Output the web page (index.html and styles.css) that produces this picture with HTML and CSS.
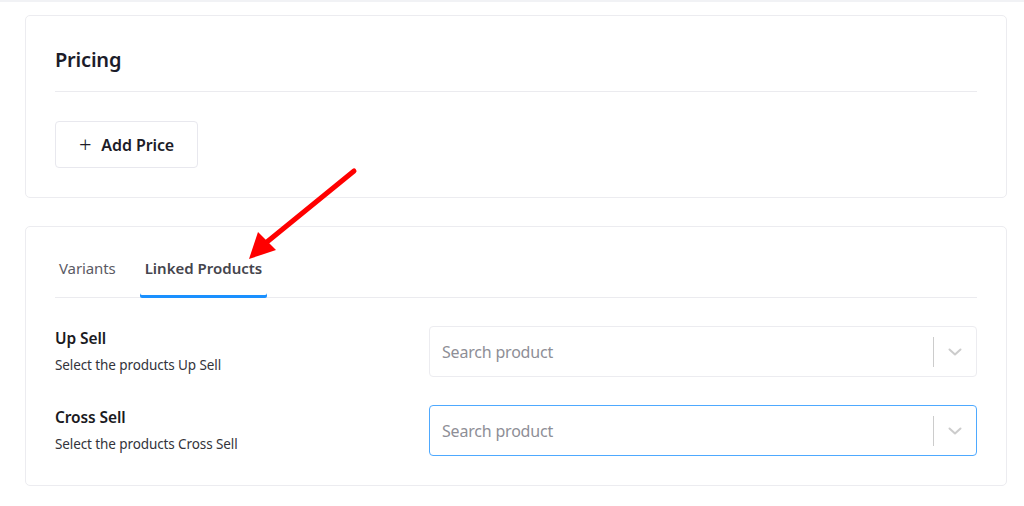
FILE: index.html
```html
<!DOCTYPE html>
<html>
<head>
<meta charset="utf-8">
<link rel="stylesheet" href="styles.css">
</head>
<body>
<div class="page">
  <section class="card pricing">
    <h2 class="card-title">Pricing</h2>
    <div class="divider"></div>
    <button class="btn-add"><span class="plus">+</span>Add Price</button>
  </section>

  <section class="card linked">
    <div class="tabs">
      <div class="tab">Variants</div>
      <div class="tab active">Linked Products</div>
    </div>
    <div class="rows">
      <div class="row">
        <div class="label">
          <div class="label-title">Up Sell</div>
          <div class="label-desc">Select the products Up Sell</div>
        </div>
        <div class="select">
          <span class="placeholder">Search product</span>
          <span class="sep"></span>
          <svg class="chev" width="14" height="8" viewBox="0 0 14 8"><path d="M1.5 1.5 L7 6.5 L12.5 1.5" fill="none" stroke="#cccccc" stroke-width="2" stroke-linecap="round" stroke-linejoin="round"/></svg>
        </div>
      </div>
      <div class="row">
        <div class="label">
          <div class="label-title">Cross Sell</div>
          <div class="label-desc">Select the products Cross Sell</div>
        </div>
        <div class="select focused">
          <span class="placeholder">Search product</span>
          <span class="sep"></span>
          <svg class="chev" width="14" height="8" viewBox="0 0 14 8"><path d="M1.5 1.5 L7 6.5 L12.5 1.5" fill="none" stroke="#cccccc" stroke-width="2" stroke-linecap="round" stroke-linejoin="round"/></svg>
        </div>
      </div>
    </div>
  </section>

  <svg class="arrow" width="1024" height="506" viewBox="0 0 1024 506">
    <line x1="354" y1="171" x2="262" y2="246" stroke="#ff0000" stroke-width="5" stroke-linecap="round"/>
    <polygon points="249,259 258,232 276,250" fill="#ff0000"/>
  </svg>
</div>
</body>
</html>
```

FILE: styles.css
```css
* { box-sizing: border-box; }
html, body { margin: 0; padding: 0; background: #ffffff; }
body {
  font-family: "Noto Sans", "Open Sans", sans-serif;
  color: #1c1c28;
}
.page {
  position: relative;
  width: 1024px;
  height: 506px;
  border-top: 2px solid #f1f2f5;
  padding: 13px 17px 0 25px;
  display: flex;
  flex-direction: column;
  gap: 28px;
}
.card {
  border: 1px solid #ececf0;
  border-radius: 5px;
  background: #fff;
  padding: 0 29px;
}
.pricing {
  height: 183px;
  padding-top: 29px;
}
.card-title {
  margin: 0;
  font-size: 20px;
  line-height: 30px;
  font-weight: 600;
  color: #1c1c2a;
  letter-spacing: -0.2px;
}
.divider {
  height: 1px;
  background: #ebebef;
  margin-top: 16px;
}
.btn-add {
  margin-top: 29px;
  height: 47px;
  width: 143px;
  border: 1px solid #e8e8ee;
  border-radius: 4px;
  background: #fff;
  font-family: inherit;
  font-size: 16px;
  font-weight: 600;
  color: #1c1c28;
  display: flex;
  align-items: center;
  justify-content: center;
  padding: 0;
  letter-spacing: -0.1px;
}
.plus {
  font-size: 22px;
  font-weight: 300;
  margin-right: 10px;
  line-height: 1;
  position: relative;
  top: -1px;
}
.linked {
  height: 260px;
  padding-top: 26px;
}
.tabs {
  display: flex;
  gap: 20px;
  border-bottom: 1px solid #ebebef;
}
.tab {
  font-size: 15px;
  line-height: 24px;
  padding: 3px 4px 17px;
  color: #5a5a64;
  letter-spacing: -0.1px;
}
.tab.active {
  color: #45454d;
  font-weight: 600;
  box-shadow: inset 0 -3px 0 #1a90ff;
  border-radius: 0 0 2px 2px;
  margin-bottom: -1px;
  padding: 3px 5px 18px;
  letter-spacing: 0;
}
.rows {
  display: flex;
  flex-direction: column;
  gap: 28px;
  margin-top: 28px;
}
.row {
  display: grid;
  grid-template-columns: 1fr 548px;
  align-items: start;
}
.label { padding-top: 1px; }
.label-title {
  font-size: 15.5px;
  line-height: 22px;
  font-weight: 600;
  color: #1a1a22;
  letter-spacing: -0.1px;
}
.label-desc {
  margin-top: 7px;
  font-size: 13.5px;
  line-height: 18px;
  color: #33333a;
  letter-spacing: -0.1px;
}
.select {
  height: 51px;
  border: 1px solid #ececf0;
  border-radius: 4px;
  display: flex;
  align-items: center;
  padding-left: 12px;
}
.select.focused {
  border-color: #4ea9ff;
}
.placeholder {
  flex: 1;
  font-size: 16px;
  color: #8e8e96;
  letter-spacing: -0.2px;
}
.sep {
  width: 1px;
  height: 30px;
  background: #cccccc;
}
.chev {
  margin: 0 14px 0 14px;
}
.arrow {
  position: absolute;
  left: 0;
  top: -2px;
  pointer-events: none;
}
```
